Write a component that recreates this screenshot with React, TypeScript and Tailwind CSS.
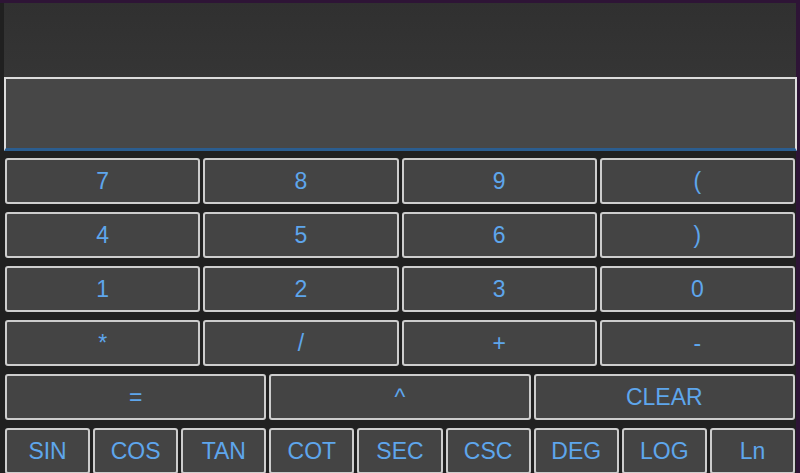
import React from "react";

const rows4 = [
  ["7", "8", "9", "("],
  ["4", "5", "6", ")"],
  ["1", "2", "3", "0"],
  ["*", "/", "+", "-"],
];
const row3 = ["=", "^", "CLEAR"];
const row9 = ["SIN", "COS", "TAN", "COT", "SEC", "CSC", "DEG", "LOG", "Ln"];

function Btn({ label }: { label: string }) {
  return (
    <button className="h-[46px] min-w-0 rounded-[3px] border-2 border-[#cdcdcd] bg-[#444444] text-[23px] leading-none text-[#5ea6ec] flex items-center justify-center">
      {label}
    </button>
  );
}

export default function App() {
  return (
    <div
      className="w-[800px] h-[473px] overflow-hidden bg-[#2e1436] pt-[3px] pr-[4px]"
      style={{ fontFamily: '"Liberation Sans", Arial, sans-serif' }}
    >
      <div className="h-full bg-[#202020] pl-[4px] flex flex-col">
        <div className="h-[74px] shrink-0 bg-gradient-to-b from-[#303030] to-[#353535]" />
        <div className="h-[74px] shrink-0 border-2 border-b-[3px] border-[#dcdcdc] border-b-[#2b5d8f] bg-[#474747] mr-[-1px]" />
        <div className="flex flex-col gap-[8px] pt-[7px] pl-[1px] pr-[1px]">
          {rows4.map((r, i) => (
            <div key={i} className="grid grid-cols-4 gap-x-[3px]">
              {r.map((l) => (
                <Btn key={l} label={l} />
              ))}
            </div>
          ))}
          <div className="grid grid-cols-3 gap-x-[3px]">
            {row3.map((l) => (
              <Btn key={l} label={l} />
            ))}
          </div>
          <div className="grid grid-cols-9 gap-x-[3px]">
            {row9.map((l) => (
              <Btn key={l} label={l} />
            ))}
          </div>
        </div>
      </div>
    </div>
  );
}
